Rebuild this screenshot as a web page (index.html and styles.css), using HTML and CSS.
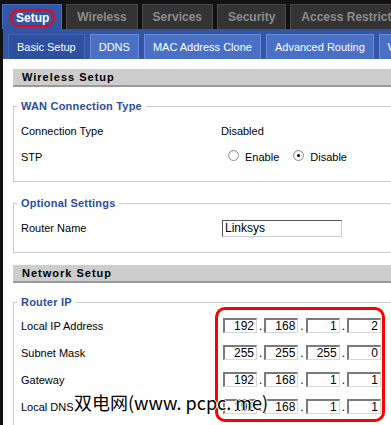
FILE: index.html
```html
<!DOCTYPE html>
<html lang="en">
<head>
  <meta charset="UTF-8">
  <title>Setup - Basic Setup</title>
  <link rel="stylesheet" href="styles.css">
</head>
<body>
  <div class="page">

    <!-- main tabs -->
    <div class="tabs">
      <div class="tab active"><span class="mark">Setup</span></div>
      <div class="tab">Wireless</div>
      <div class="tab">Services</div>
      <div class="tab">Security</div>
      <div class="tab">Access Restrictions</div>
    </div>

    <!-- sub tabs -->
    <div class="subbar">
      <div class="subtab active">Basic Setup</div>
      <div class="subtab">DDNS</div>
      <div class="subtab">MAC Address Clone</div>
      <div class="subtab">Advanced Routing</div>
      <div class="subtab">Wireless</div>
    </div>

    <div class="content">
      <div class="section-head">Wireless Setup</div>

      <fieldset class="group">
        <legend>WAN Connection Type</legend>
        <div class="row">
          <div class="label">Connection Type</div>
          <div class="value">Disabled</div>
        </div>
        <div class="row">
          <div class="label">STP</div>
          <div class="value radios">
            <span class="radio"></span><span class="radio-text">Enable</span>
            <span class="radio checked"></span><span class="radio-text">Disable</span>
          </div>
        </div>
      </fieldset>

      <fieldset class="group">
        <legend>Optional Settings</legend>
        <div class="row">
          <div class="label">Router Name</div>
          <div class="value"><div class="textbox">Linksys</div></div>
        </div>
      </fieldset>

      <div class="section-head net">Network Setup</div>

      <fieldset class="group ip-group">
        <legend>Router IP</legend>
        <div class="row ip-row">
          <div class="label">Local IP Address</div>
          <div class="value ip">
            <span class="octet">192</span>.<span class="octet">168</span>.<span class="octet">1</span>.<span class="octet">2</span>
          </div>
        </div>
        <div class="row ip-row">
          <div class="label">Subnet Mask</div>
          <div class="value ip">
            <span class="octet">255</span>.<span class="octet">255</span>.<span class="octet">255</span>.<span class="octet">0</span>
          </div>
        </div>
        <div class="row ip-row">
          <div class="label">Gateway</div>
          <div class="value ip">
            <span class="octet">192</span>.<span class="octet">168</span>.<span class="octet">1</span>.<span class="octet">1</span>
          </div>
        </div>
        <div class="row ip-row">
          <div class="label">Local DNS</div>
          <div class="value ip">
            <span class="octet">192</span>.<span class="octet">168</span>.<span class="octet">1</span>.<span class="octet">1</span>
          </div>
        </div>
      </fieldset>
    </div>

    <!-- annotation overlays -->
    <div class="highlight"></div>
    <div class="watermark">双电网(www. pcpc. me)</div>
  </div>
</body>
</html>
```

FILE: styles.css
```css
html, body {
  margin: 0;
  overflow: hidden;
}
body {
  background: #111;
  font-family: "Liberation Sans", Arial, sans-serif;
  font-size: 11px;
  color: #000;
}
.page {
  position: relative;
  width: 800px;
  padding-left: 3px;
}

/* main tabs */
.tabs {
  display: flex;
  gap: 4px;
  height: 29px;
  padding-top: 4px;
  box-sizing: border-box;
}
.tab {
  height: 25px;
  box-sizing: border-box;
  padding: 0 10px;
  background: #333;
  border: 1px solid #4a4a4a;
  border-bottom: none;
  color: #8c8c8c;
  font-weight: bold;
  font-size: 12px;
  line-height: 24px;
  white-space: nowrap;
}
.tab.active {
  background: #3455a4;
  border-color: #4a6cc0;
  color: #fff;
  padding: 4px 6px 0 7px;
  margin-left: -1px;
}
.mark {
  display: block;
  border: 2px solid #f00;
  border-radius: 9px;
  padding: 0 4px;
  line-height: 14px;
}

/* sub tabs */
.subbar {
  display: flex;
  gap: 5px;
  height: 30px;
  padding: 5px 0 0 5px;
  box-sizing: border-box;
  background: #3455a4;
}
.subtab {
  height: 25px;
  box-sizing: border-box;
  padding: 0 8px;
  background: #4a70c6;
  border: 1px solid #6a8cd8;
  border-bottom: none;
  color: #fff;
  font-size: 11px;
  line-height: 24px;
  white-space: nowrap;
}
.subtab.active {
  background: #2f509e;
  border-color: #4466b4;
}

/* content */
.content {
  background: #fff;
  padding: 10px 0 40px 10px;
  height: 400px;
}
.section-head {
  height: 18px;
  box-sizing: border-box;
  background: #cdcdcd;
  border-bottom: 2px solid #9a9a9a;
  padding-left: 9px;
  font-weight: bold;
  letter-spacing: 1px;
  line-height: 17px;
}
.section-head.net {
  margin-top: 12px;
}
.group {
  margin: 12px 0 0;
  padding: 5px 0 11px 7px;
  border: 1px solid #cbcbcb;
}
.group + .group {
  margin-top: 14px;
}
.group.ip-group {
  padding-top: 3px;
}
.group legend {
  padding: 0 4px;
  margin-left: -4px;
  color: #2d4d9c;
  font-weight: bold;
  font-size: 11px;
  letter-spacing: 0.2px;
  line-height: 14px;
}
.row {
  display: flex;
  align-items: center;
  height: 26px;
}
.ip-row {
  height: 27px;
}
.label {
  width: 200px;
}

/* radios */
.radios {
  display: flex;
  align-items: center;
}
.radio {
  width: 9px;
  height: 9px;
  border: 1px solid #8d8d8d;
  border-radius: 50%;
  background: radial-gradient(circle at 60% 60%, #fff 40%, #dcdcd6 100%);
  margin: -4px 6px 0 7px;
  position: relative;
}
.radio.checked::after {
  content: "";
  position: absolute;
  left: 3px;
  top: 3px;
  width: 3px;
  height: 3px;
  border-radius: 50%;
  background: #000;
}
.radio-text {
  margin-right: 7px;
}

/* inputs */
.textbox {
  width: 120px;
  height: 17px;
  box-sizing: border-box;
  margin-left: 1px;
  border: 1px solid #ccc;
  border-top-color: #555;
  border-left-color: #555;
  padding-left: 2px;
  line-height: 15px;
  font-size: 12px;
}
.ip {
  display: flex;
  align-items: center;
  margin-left: 2px;
  font-size: 12px;
}
.octet {
  width: 34px;
  height: 15px;
  box-sizing: border-box;
  border: 1px solid #d8d8d8;
  border-top: 2px solid #7a7a7a;
  border-left: 2px solid #7a7a7a;
  text-align: right;
  padding-right: 2px;
  line-height: 13px;
  margin: 0 2px 0 0;
}
.octet:not(:first-child) {
  margin-left: 2px;
}

/* annotations laid over the page */
.highlight {
  position: absolute;
  left: 215px;
  top: 307px;
  width: 164px;
  height: 109px;
  border: 3px solid #f00;
  border-radius: 10px;
}
.watermark {
  position: absolute;
  left: 74px;
  top: 390px;
  font-family: "Noto Sans CJK SC", sans-serif;
  font-size: 18px;
  line-height: 24px;
  color: #000;
  text-shadow: 1px 0 #fff, -1px 0 #fff, 0 1px #fff, 0 -1px #fff;
  white-space: nowrap;
}
```
